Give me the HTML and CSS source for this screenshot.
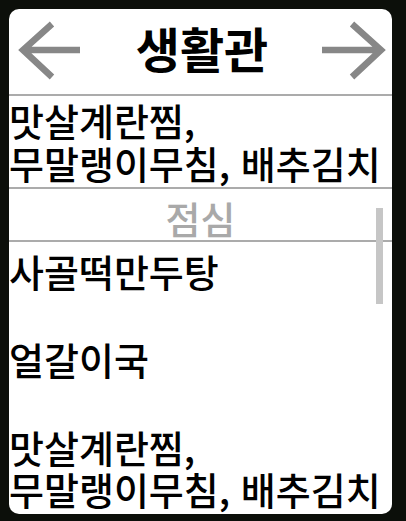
FILE: index.html
```html
<!DOCTYPE html>
<html lang="ko">
<head>
<meta charset="utf-8">
<link rel="stylesheet" href="styles.css">
</head>
<body>
<div class="card">
  <header class="header">
    <svg class="arrow" viewBox="0 0 68 60" width="68" height="60" aria-hidden="true">
      <path d="M63 30H5M35 4L6 30L35 57" fill="none" stroke="#878787" stroke-width="6.5"/>
    </svg>
    <h1 class="title">생활관</h1>
    <svg class="arrow" viewBox="0 0 68 60" width="68" height="60" aria-hidden="true">
      <path d="M3 30H61M33 4L62 30L33 57" fill="none" stroke="#878787" stroke-width="6.5"/>
    </svg>
  </header>
  <div class="block">맛살계란찜,<br>무말랭이무침, 배추김치</div>
  <div class="section">점심</div>
  <div class="list">
    <div class="item">사골떡만두탕</div>
    <div class="item">얼갈이국</div>
    <div class="item">맛살계란찜,<br>무말랭이무침, 배추김치</div>
  </div>
  <div class="scrollbar"></div>
</div>
</body>
</html>
```

FILE: styles.css
```css
html, body {
  margin: 0;
  padding: 0;
  background: #0c0f0a;
  width: 406px;
  height: 521px;
  overflow: hidden;
}

body {
  padding: 9px 14px 7px 9px;
  box-sizing: border-box;
  font-family: "Noto Sans CJK KR", "Noto Sans", sans-serif;
  color: #000;
}

.card {
  position: relative;
  background: #fff;
  border-radius: 10px;
  height: 505px;
  overflow: hidden;
  display: flex;
  flex-direction: column;
}

.header {
  flex: none;
  box-sizing: border-box;
  height: 87px;
  border-bottom: 2px solid #ababab;
  display: flex;
  align-items: center;
  justify-content: space-between;
  padding: 0 5px 4px 8px;
}

.arrow {
  display: block;
  flex: none;
}

.title {
  margin: 0 0 6px 0;
  font-size: 48px;
  font-weight: 700;
  line-height: 1;
}

.block {
  flex: none;
  font-size: 38px;
  font-weight: 500;
  line-height: 43px;
  padding: 2px 0 3px 0;
  border-bottom: 2px solid #ababab;
  white-space: nowrap;
}

.section {
  flex: none;
  height: 53px;
  box-sizing: border-box;
  text-align: center;
  color: #a9a9a9;
  font-size: 38px;
  font-weight: 500;
  line-height: 52px;
  padding-top: 3px;
  border-bottom: 2px solid #ababab;
}

.list {
  display: flex;
  flex-direction: column;
  gap: 46px;
  padding: 8px 0 0 0;
}

.item {
  font-size: 38px;
  font-weight: 500;
  line-height: 42px;
  white-space: nowrap;
}

.scrollbar {
  position: absolute;
  left: 367px;
  top: 199px;
  width: 7px;
  height: 96px;
  background: #c6c6c6;
}
```
